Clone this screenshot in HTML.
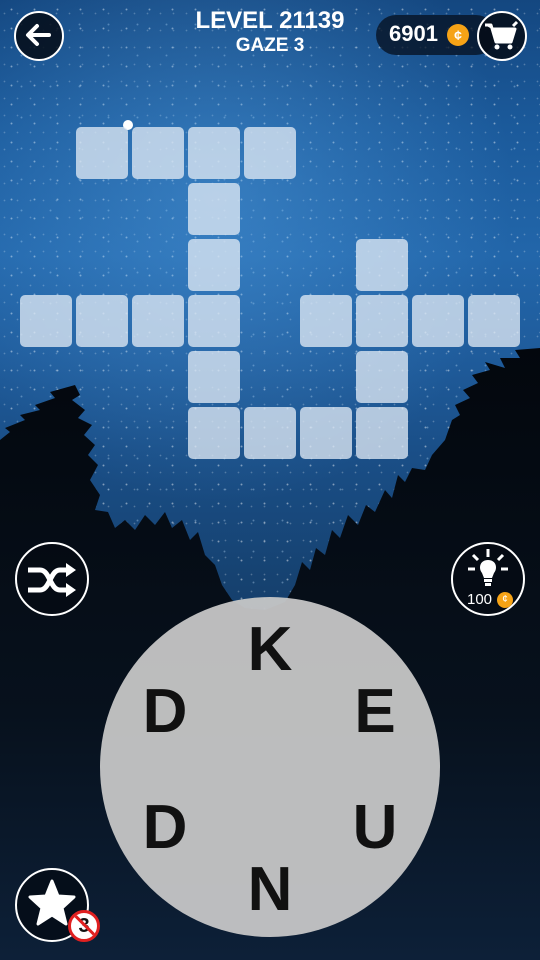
<!DOCTYPE html>
<html><head><meta charset="utf-8"><style>
*{margin:0;padding:0;box-sizing:border-box}
body{width:540px;height:960px;overflow:hidden;position:relative;font-family:"Liberation Sans",sans-serif;background:#0b1a2c}
#sky{position:absolute;left:0;top:0;width:540px;height:640px;
background:
radial-gradient(circle,rgba(255,255,255,.45) 0.7px,transparent 1.2px) 0 0/23px 19px,
radial-gradient(circle,rgba(200,230,255,.35) 0.7px,transparent 1.2px) 7px 9px/29px 31px,
radial-gradient(circle,rgba(255,255,255,.25) 0.6px,transparent 1.1px) 11px 5px/13px 17px,
linear-gradient(180deg,#144780 0%,#1b5a9b 20%,#2266aa 40%,#1f5c9c 55%,#1a4f88 70%,#143c66 100%)}
.t{position:absolute;width:52px;height:52px;border-radius:5px;background:rgba(222,232,244,0.78)}
.c{position:absolute;border:2px solid #fff;border-radius:50%;background:rgba(5,12,22,0.85)}
.L{position:absolute;font-weight:bold;font-size:62px;color:#111;transform:translate(-50%,-50%);line-height:1}
</style></head><body>
<div id="sky"></div>
<svg width="540" height="960" style="position:absolute;left:0;top:0">
<defs><radialGradient id="g" cx="0.4" cy="0.35" r="0.55"><stop offset="0" stop-color="#5aa8ea" stop-opacity=".4"/><stop offset="1" stop-color="#5aa8ea" stop-opacity="0"/></radialGradient>
<linearGradient id="b" x1="0" y1="0" x2="0" y2="1"><stop offset="0" stop-color="#03070d"/><stop offset="0.6" stop-color="#07111d"/><stop offset="1" stop-color="#0d2038"/></linearGradient></defs>
<rect width="540" height="560" fill="url(#g)"/>
<circle cx="128" cy="125" r="5" fill="#fff"/>
<path fill="url(#b)" d="M0,440 L10,432 L5,428 L25,420 L20,415 L40,410 L35,405 L55,398 L50,392 L75,385 L80,395 L72,400 L85,410 L78,418 L92,425 L84,435 L95,445 L88,455 L98,465 L90,480 L100,495 L95,510 L108,512 L115,528 L125,520 L135,530 L145,515 L155,525 L165,512 L172,528 L182,520 L190,540 L198,532 L205,555 L215,565 L222,585 L232,600 L245,608 L265,610 L285,602 L295,585 L302,562 L310,570 L316,548 L325,555 L332,530 L340,538 L348,515 L358,525 L366,505 L375,512 L385,490 L392,498 L398,475 L405,482 L412,468 L425,470 L432,455 L445,440 L452,420 L460,415 L455,405 L470,398 L463,390 L478,383 L472,375 L490,370 L485,362 L505,368 L500,358 L520,358 L515,350 L540,348 L540,960 L0,960 Z"/>
</svg>
<div class="c" style="left:14px;top:11px;width:50px;height:50px"></div>
<svg style="position:absolute;left:24px;top:22px" width="28" height="26" viewBox="0 0 28 26"><path d="M25,13 H5 M13,4 L4,13 L13,22" stroke="#fff" stroke-width="4" fill="none" stroke-linecap="round" stroke-linejoin="round"/></svg>
<div style="position:absolute;left:0;width:540px;top:8px;text-align:center;color:#fff;font-weight:bold;font-size:24px;line-height:26px">LEVEL 21139</div>
<div style="position:absolute;left:0;width:540px;top:35px;text-align:center;color:#fff;font-weight:bold;font-size:19px;line-height:22px">GAZE 3</div>
<div style="position:absolute;left:376px;top:15px;width:120px;height:40px;border-radius:20px;background:rgba(5,15,30,0.75)"></div>
<div style="position:absolute;left:389px;top:21px;color:#fff;font-weight:bold;font-size:22px">6901</div>
<div style="position:absolute;left:447px;top:24px;width:22px;height:22px;border-radius:50%;background:#f6a316;color:#fff;font-size:14px;text-align:center;line-height:22px;font-weight:bold">¢</div>
<div class="c" style="left:477px;top:11px;width:50px;height:50px"></div>
<svg style="position:absolute;left:483px;top:20px" width="36" height="32" viewBox="0 0 36 32"><path d="M2,5 H8 L13,22 H28 L32,9 H9" fill="#fff" stroke="#fff" stroke-width="3" stroke-linejoin="round"/><path d="M30,6 L34,2" stroke="#fff" stroke-width="3"/><circle cx="14" cy="27" r="2.5" fill="#fff"/><circle cx="27" cy="27" r="2.5" fill="#fff"/></svg>

<div class="t" style="left:76px;top:127px"></div><div class="t" style="left:132px;top:127px"></div><div class="t" style="left:188px;top:127px"></div><div class="t" style="left:244px;top:127px"></div>
<div class="t" style="left:188px;top:183px"></div><div class="t" style="left:188px;top:239px"></div><div class="t" style="left:356px;top:239px"></div>
<div class="t" style="left:20px;top:295px"></div><div class="t" style="left:76px;top:295px"></div><div class="t" style="left:132px;top:295px"></div><div class="t" style="left:188px;top:295px"></div>
<div class="t" style="left:300px;top:295px"></div><div class="t" style="left:356px;top:295px"></div><div class="t" style="left:412px;top:295px"></div><div class="t" style="left:468px;top:295px"></div>
<div class="t" style="left:188px;top:351px"></div><div class="t" style="left:356px;top:351px"></div>
<div class="t" style="left:188px;top:407px"></div><div class="t" style="left:244px;top:407px"></div><div class="t" style="left:300px;top:407px"></div><div class="t" style="left:356px;top:407px"></div>

<div class="c" style="left:15px;top:542px;width:74px;height:74px;background:rgba(5,10,18,.6)"></div>
<svg style="position:absolute;left:26px;top:562px" width="52" height="36" viewBox="0 0 52 36"><path d="M2,8 H14 C24,8 24,28 34,28 H44 M2,28 H14 C24,28 24,8 34,8 H44" stroke="#fff" stroke-width="5" fill="none"/><path d="M40,1 L50,8 L40,15 Z M40,21 L50,28 L40,35 Z" fill="#fff"/></svg>
<div class="c" style="left:451px;top:542px;width:74px;height:74px;background:rgba(5,10,18,.6)"></div>
<svg style="position:absolute;left:463px;top:547px" width="50" height="42" viewBox="0 0 50 42"><path d="M25,2 V10 M10,8 L15,13 M40,8 L35,13 M5,22 H12 M38,22 H45" stroke="#fff" stroke-width="3"/><path d="M25,13 C17,13 15,21 19,26 L21,31 H29 L31,26 C35,21 33,13 25,13 Z" fill="#fff"/><rect x="21" y="32" width="8" height="3" fill="#fff"/><rect x="22" y="36" width="6" height="3" fill="#fff"/></svg>
<div style="position:absolute;left:467px;top:591px;color:#fff;font-size:15px">100</div>
<div style="position:absolute;left:497px;top:592px;width:16px;height:16px;border-radius:50%;background:#f6a316;color:#fff;font-size:10px;text-align:center;line-height:16px">¢</div>

<div style="position:absolute;left:100px;top:597px;width:340px;height:340px;border-radius:50%;background:rgba(200,200,200,0.94)"></div>
<div class="L" style="left:270px;top:650px">K</div>
<div class="L" style="left:375px;top:712px">E</div>
<div class="L" style="left:375px;top:828px">U</div>
<div class="L" style="left:270px;top:890px">N</div>
<div class="L" style="left:165px;top:828px">D</div>
<div class="L" style="left:165px;top:712px">D</div>

<div class="c" style="left:15px;top:868px;width:74px;height:74px"></div>
<svg style="position:absolute;left:26px;top:878px" width="52" height="50" viewBox="0 0 52 50"><path d="M26,3 L32,18 L48,19 L36,30 L40,46 L26,37 L12,46 L16,30 L4,19 L20,18 Z" fill="#fff" stroke="#fff" stroke-width="3" stroke-linejoin="round"/></svg>
<div style="position:absolute;left:68px;top:910px;width:32px;height:32px;border-radius:50%;background:#fff;border:3px solid #e02020;text-align:center;font-weight:bold;font-size:20px;line-height:26px;color:#111;overflow:hidden">3<div style="position:absolute;left:-3px;top:12px;width:36px;height:3px;background:#e02020;transform:rotate(45deg)"></div></div>
</body></html>
